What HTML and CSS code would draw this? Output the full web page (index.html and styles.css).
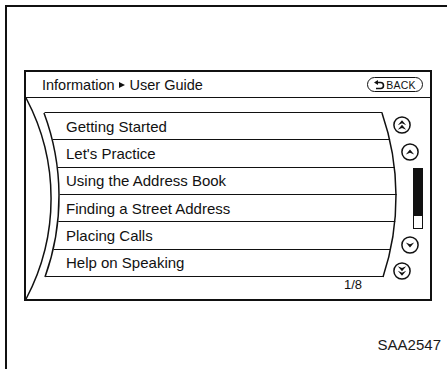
FILE: index.html
```html
<!DOCTYPE html>
<html lang="en">
<head>
    <meta charset="UTF-8">
    <title>User Guide</title>
    <link rel="stylesheet" href="styles.css">
</head>
<body>
<div class="sheet">
    <div class="screen">
        <div class="screen-head">
            <span class="crumb">Information<span class="crumb-arrow"></span>User Guide</span>
            <span class="back">
                <svg width="11" height="10" viewBox="0 0 11 10">
                    <path d="M3.5 2.5 H6.5 A3 3 0 0 1 6.5 8.5 H2" fill="none" stroke="#111" stroke-width="1.6"/>
                    <polygon points="0,2.5 4,0 4,5" fill="#111"/>
                </svg>BACK
            </span>
        </div>
        <div class="screen-body">
            <div class="list-col">
                <ul class="menu">
                    <li>Getting Started</li>
                    <li>Let's Practice</li>
                    <li>Using the Address Book</li>
                    <li>Finding a Street Address</li>
                    <li>Placing Calls</li>
                    <li>Help on Speaking</li>
                </ul>
                <div class="page-count">1/8</div>
            </div>
            <div class="scroll-col">
                <svg class="btn btn-top" width="18" height="18" viewBox="0 0 18 18">
                    <circle cx="9" cy="9" r="8.1" fill="#fff" stroke="#111" stroke-width="1.5"/>
                    <path d="M4.8 9.2 L9 4.2 L13.2 9.2 L9 7.3Z M4.8 13.8 L9 8.8 L13.2 13.8 L9 11.9Z" fill="#111"/>
                </svg>
                <svg class="btn btn-up" width="18" height="18" viewBox="0 0 18 18">
                    <circle cx="9" cy="9" r="8.1" fill="#fff" stroke="#111" stroke-width="1.5"/>
                    <path d="M4.8 11.6 L9 6.4 L13.2 11.6 L9 9.7Z" fill="#111"/>
                </svg>
                <div class="bar"></div>
                <svg class="btn btn-down" width="18" height="18" viewBox="0 0 18 18">
                    <circle cx="9" cy="9" r="8.1" fill="#fff" stroke="#111" stroke-width="1.5"/>
                    <path d="M4.8 6.4 L9 11.6 L13.2 6.4 L9 8.3Z" fill="#111"/>
                </svg>
                <svg class="btn btn-bottom" width="18" height="18" viewBox="0 0 18 18">
                    <circle cx="9" cy="9" r="8.1" fill="#fff" stroke="#111" stroke-width="1.5"/>
                    <path d="M4.8 4.2 L9 9.2 L13.2 4.2 L9 6.1Z M4.8 8.8 L9 13.8 L13.2 8.8 L9 10.7Z" fill="#111"/>
                </svg>
            </div>
            <!-- curved edges of the menu drum -->
            <svg class="arcs" width="404" height="201" viewBox="0 0 404 201">
                <path d="M0 0 A214 214 0 0 1 0 201" fill="none" stroke="#111" stroke-width="1.5"/>
                <path d="M18 15 A239 239 0 0 1 19 179" fill="none" stroke="#111" stroke-width="1.5"/>
                <path d="M356 15 A256 256 0 0 1 357 179" fill="none" stroke="#111" stroke-width="1.5"/>
            </svg>
        </div>
    </div>
    <div class="code">SAA2547</div>
</div>
</body>
</html>
```

FILE: styles.css
```css
body {
    margin: 0;
    background-color: #fff;
    font-family: "Liberation Sans", Arial, sans-serif;
    color: #111;
}

.sheet {
    margin: 5px 0 0 5px;
    height: 364px;
    border-left: 2px solid #111;
    border-top: 2px solid #111;
    box-sizing: border-box;
}

.screen {
    margin: 63px 0 0 17px;
    width: 408px;
    height: 231px;
    border: 2px solid #111;
    box-sizing: border-box;
}

.screen-head {
    height: 26px;
    border-bottom: 1.5px solid #111;
    box-sizing: border-box;
    display: flex;
    align-items: center;
    justify-content: space-between;
    padding: 0 7px 0 16px;
    font-size: 14.5px;
}

.crumb {
    display: flex;
    align-items: center;
}

.crumb-arrow {
    display: inline-block;
    width: 0;
    height: 0;
    border-left: 6px solid #111;
    border-top: 3.5px solid transparent;
    border-bottom: 3.5px solid transparent;
    margin: 1px 5px 0 4px;
}

.back {
    display: flex;
    align-items: center;
    justify-content: center;
    gap: 1px;
    width: 56px;
    height: 15px;
    border: 1.5px solid #111;
    border-radius: 8px;
    box-sizing: border-box;
    font-size: 10.5px;
    letter-spacing: 0.2px;
}

.screen-body {
    position: relative;
    height: 201px;
    display: flex;
}

.list-col {
    margin: 14px 0 0 14px;
    width: 360px;
}

.menu {
    list-style: none;
    margin: 0;
    padding: 0;
    border-top: 1.5px solid #111;
    clip-path: path("M4 -1 A239 239 0 0 1 5 167 L343 167 A256 256 0 0 0 342 -1 Z");
}

.menu li {
    height: 27.33px;
    box-sizing: border-box;
    border-bottom: 1.5px solid #111;
    padding-left: 26px;
    font-size: 15px;
    display: flex;
    align-items: center;
}

.page-count {
    text-align: right;
    padding-right: 38px;
    font-size: 13px;
    line-height: 16px;
}

.scroll-col {
    margin-left: -7px;
    padding-top: 18px;
    display: flex;
    flex-direction: column;
}

.btn {
    display: block;
}

.btn-up {
    margin: 9px 0 0 8px;
}

.bar {
    margin: 7px 0 0 20px;
    width: 10px;
    height: 61px;
    border: 1.5px solid #111;
    box-sizing: border-box;
    background: linear-gradient(#111 0, #111 80%, #fff 80%);
}

.btn-down {
    margin: 7px 0 0 8px;
}

.btn-bottom {
    margin: 8px 0 0 0;
}

.arcs {
    position: absolute;
    left: 0;
    top: 0;
    pointer-events: none;
}

.code {
    margin-top: 35px;
    text-align: right;
    padding-right: 6px;
    font-size: 15px;
    line-height: 18px;
    color: #1a1a1a;
}
```
